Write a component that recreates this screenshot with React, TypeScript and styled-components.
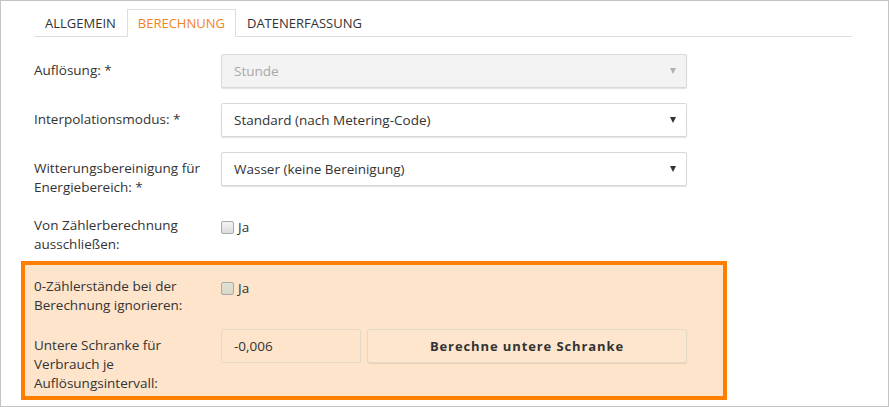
import React, { FC } from "react";
import styled, { createGlobalStyle, css } from "styled-components";

const GlobalStyle = createGlobalStyle`
  html, body {
    margin: 0;
    padding: 0;
    background: #ffffff;
  }
  body {
    font-family: "Open Sans", "Noto Sans", sans-serif;
    color: #333333;
  }
`;

const Frame = styled.div`
  width: 889px;
  height: 407px;
  box-sizing: border-box;
  border: 1px solid #c4c4c4;
  padding: 8px 36px 0 33px;
  overflow: hidden;
`;

const TabBar = styled.div`
  display: flex;
  border-bottom: 1px solid #dddddd;
`;

const Tab = styled.div<{ $active?: boolean }>`
  height: 28px;
  box-sizing: border-box;
  margin-bottom: -1px;
  padding: 0 10px;
  border: 1px solid transparent;
  font-size: 13px;
  line-height: 26px;
  text-transform: uppercase;
  color: #333333;
  ${(p) =>
    p.$active &&
    css`
      border-color: #dddddd #dddddd transparent;
      background: #ffffff;
      color: #f5831f;
    `}
`;

const Form = styled.div`
  margin-top: 17px;
`;

const Row = styled.div<{ $mb?: number }>`
  display: grid;
  grid-template-columns: 187px 466px;
  align-items: start;
  margin-bottom: ${(p) => (p.$mb ?? 15)}px;
`;

const Label = styled.div`
  padding-top: 7px;
  font-size: 13.5px;
  line-height: 19px;
  color: #333333;
`;

const Select = styled.div<{ $disabled?: boolean }>`
  height: 34px;
  box-sizing: border-box;
  display: flex;
  align-items: center;
  justify-content: space-between;
  padding: 0 6px 0 12px;
  border: 1px solid #d9d9d9;
  border-radius: 2px;
  box-shadow: 0 1px 1px rgba(0, 0, 0, 0.12);
  font-size: 13.5px;
  background: ${(p) => (p.$disabled ? "#f3f3f3" : "#ffffff")};
  color: ${(p) => (p.$disabled ? "#a8a8a8" : "#333333")};
`;

const Arrow = styled.span<{ $disabled?: boolean }>`
  width: 0;
  height: 0;
  border-left: 3.5px solid transparent;
  border-right: 3.5px solid transparent;
  border-top: 6px solid ${(p) => (p.$disabled ? "#b0b0b0" : "#333333")};
  margin-right: 4px;
`;

const CheckWrap = styled.label`
  display: flex;
  align-items: center;
  gap: 4px;
  padding-top: 9px;
  font-size: 13.5px;
  line-height: 19px;
  color: #333333;
`;

const CheckBox = styled.span<{ $tint?: boolean }>`
  width: 13px;
  height: 13px;
  box-sizing: border-box;
  border: 1px solid #a9a9a9;
  border-radius: 2px;
  background: ${(p) =>
    p.$tint
      ? "linear-gradient(#e2e2d4, #d8d8c8)"
      : "linear-gradient(#f4f4f4, #dcdcdc)"};
`;

const Highlight = styled.div`
  margin: 7px 0 0 -13px;
  width: 706px;
  box-sizing: border-box;
  border: 4px solid #ff8000;
  background: #fde4ca;
  padding: 5px 0 3px 9px;
`;

const Controls = styled.div`
  display: flex;
  gap: 6px;
`;

const NumberInput = styled.div`
  width: 140px;
  height: 34px;
  box-sizing: border-box;
  display: flex;
  align-items: center;
  padding: 0 12px;
  border: 1px solid #e0dac6;
  border-radius: 2px;
  font-size: 13.5px;
  color: #333333;
`;

const Button = styled.button`
  width: 320px;
  height: 34px;
  box-sizing: border-box;
  border: 1px solid #e2dbc6;
  border-radius: 3px;
  background: #fde6cd;
  box-shadow: 0 1px 1px rgba(120, 100, 60, 0.15);
  font-family: "Open Sans", "Noto Sans", sans-serif;
  font-weight: 700;
  font-size: 13px;
  letter-spacing: 0.9px;
  color: #333333;
`;

const tabs = ["Allgemein", "Berechnung", "Datenerfassung"];

const App: FC = () => {
  return (
    <>
      <GlobalStyle />
      <Frame>
        <TabBar>
          {tabs.map((t) => (
            <Tab key={t} $active={t === "Berechnung"}>
              {t}
            </Tab>
          ))}
        </TabBar>
        <Form>
          <Row>
            <Label>Auflösung: *</Label>
            <Select $disabled>
              Stunde
              <Arrow $disabled />
            </Select>
          </Row>
          <Row>
            <Label>Interpolationsmodus: *</Label>
            <Select>
              Standard (nach Metering-Code)
              <Arrow />
            </Select>
          </Row>
          <Row $mb={12}>
            <Label>
              Witterungsbereinigung für
              <br />
              Energiebereich: *
            </Label>
            <Select>
              Wasser (keine Bereinigung)
              <Arrow />
            </Select>
          </Row>
          <Row $mb={0}>
            <Label>
              Von Zählerberechnung
              <br />
              ausschließen:
            </Label>
            <CheckWrap>
              <CheckBox />
              Ja
            </CheckWrap>
          </Row>
          <Highlight>
            <Row $mb={14}>
              <Label>
                0-Zählerstände bei der
                <br />
                Berechnung ignorieren:
              </Label>
              <CheckWrap>
                <CheckBox $tint />
                Ja
              </CheckWrap>
            </Row>
            <Row $mb={0}>
              <Label>
                Untere Schranke für
                <br />
                Verbrauch je
                <br />
                Auflösungsintervall:
              </Label>
              <Controls>
                <NumberInput>-0,006</NumberInput>
                <Button>Berechne untere Schranke</Button>
              </Controls>
            </Row>
          </Highlight>
        </Form>
      </Frame>
    </>
  );
};

export default App;
